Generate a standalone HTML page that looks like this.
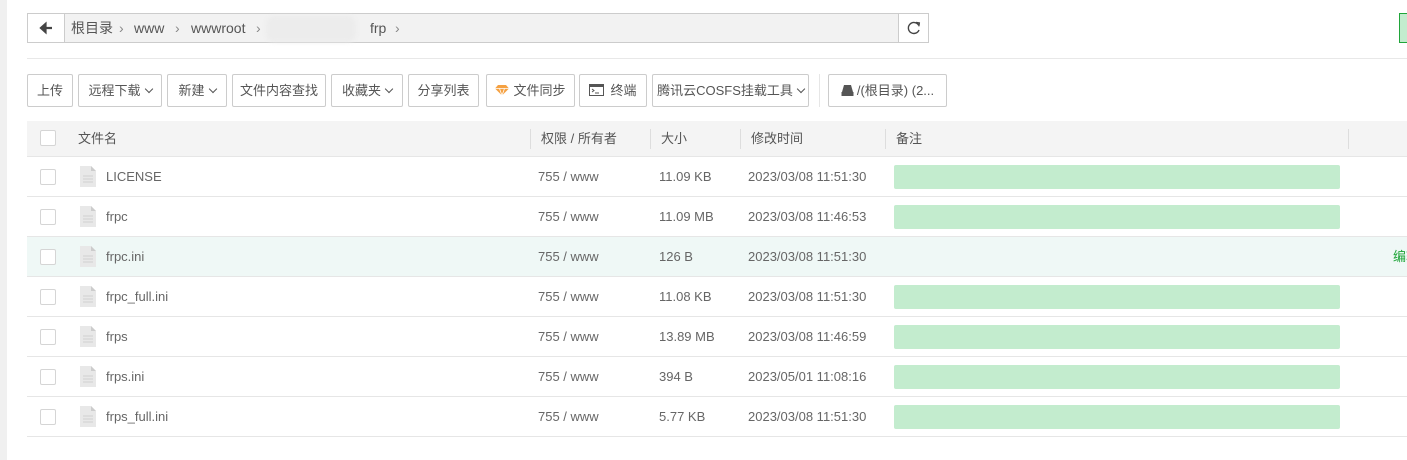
<!DOCTYPE html>
<html><head><meta charset="utf-8"><style>
*{box-sizing:border-box;margin:0;padding:0}
body{width:1407px;height:460px;overflow:hidden;background:#fff;font-family:"Liberation Sans","Noto Sans CJK SC",sans-serif;font-size:13px;color:#555;position:relative}
.abs{position:absolute;white-space:nowrap}
.strip{left:0;top:0;width:7px;height:460px;background:#f0f0f0}
.crumb{left:27px;top:13px;width:902px;height:30px;border:1px solid #ccc;background:#f2f2f2}
.back{left:0;top:0;width:37px;height:28px;background:#fff;border-right:1px solid #ccc}
.ref{right:0;top:0;width:30px;height:28px;background:#fff;border-left:1px solid #ccc}
.ct{top:0;line-height:28px;height:28px;font-size:14px;color:#555}
.btn{top:74px;height:33px;border:1px solid #ccc;border-radius:2px;background:#fff;font-size:13px;color:#555;line-height:31px;text-align:center}
.hdr{left:27px;top:121px;width:1380px;height:36px;background:#f4f4f4;border-bottom:1px solid #e6e6e6}
.row{left:27px;width:1380px;height:40px;border-bottom:1px solid #e6e6e6}
.cb{width:16px;height:16px;border:1px solid #d5d5d5;border-radius:2px;background:#fff}
.t{font-size:13px;color:#666;line-height:20px}
.vd{top:8px;width:1px;height:20px;background:#ddd}
.bar{left:867px;top:8px;width:446px;height:24px;background:#c3ecce;border-radius:2px}
.chev{display:inline-block;width:6px;height:6px;border-right:1.3px solid #555;border-bottom:1.3px solid #555;transform:rotate(45deg);margin-left:5px;position:relative;top:-3px}
</style></head><body>
<div class="abs strip"></div>
<div class="abs crumb">
 <div class="abs back"><svg width="37" height="28"><path d="M13 14h11M13 14l4.5-4v8z" stroke="#444" stroke-width="2.2" fill="#444"/></svg></div>
 <span class="abs ct" style="left:43px">根目录</span><span class="abs ct" style="left:91px;color:#888">›</span>
 <span class="abs ct" style="left:106px">www</span><span class="abs ct" style="left:147px;color:#888">›</span>
 <span class="abs ct" style="left:163px">wwwroot</span><span class="abs ct" style="left:228px;color:#888">›</span>
 <div class="abs" style="left:238px;top:2px;width:90px;height:26px;background:#ececec;border-radius:8px;filter:blur(2px)"></div>
 <span class="abs ct" style="left:342px">frp</span><span class="abs ct" style="left:367px;color:#888">›</span>
 <div class="abs ref"><svg width="30" height="28"><path d="M19.5 11A5.5 5.5 0 1 0 20 16" stroke="#444" stroke-width="1.4" fill="none"/><path d="M17 8.5l3.3 0.5-0.5 3.3" stroke="#444" stroke-width="1.4" fill="none"/></svg></div>
</div>
<div class="abs" style="left:1399px;top:13px;width:10px;height:30px;background:#c3ecce;border:1px solid #20a53a"></div>
<div class="abs" style="left:27px;top:58px;width:1380px;height:1px;background:#e8e8e8"></div>

<div class="abs btn" style="left:27px;width:46px">上传</div>
<div class="abs btn" style="left:78px;width:84px">远程下载<i class="chev"></i></div>
<div class="abs btn" style="left:167px;width:60px">新建<i class="chev"></i></div>
<div class="abs btn" style="left:232px;width:94px">文件内容查找</div>
<div class="abs btn" style="left:331px;width:72px">收藏夹<i class="chev"></i></div>
<div class="abs btn" style="left:408px;width:71px">分享列表</div>
<div class="abs btn" style="left:486px;width:89px"><svg width="14" height="12" style="vertical-align:-1px;margin-right:4px"><path d="M3 1h8l3 3.5-7 7-7-7z" fill="#f5a142"/><path d="M0 4.5h14M4.5 4.5L7 11.5 9.5 4.5" stroke="#fff" stroke-width="0.8" fill="none"/></svg>文件同步</div>
<div class="abs btn" style="left:579px;width:68px"><svg width="15" height="12" style="vertical-align:-1px;margin-right:6px"><rect x="0.5" y="0.5" width="14" height="11" fill="none" stroke="#555"/><rect x="0.5" y="0.5" width="14" height="2.5" fill="#555"/><path d="M3 5l2 1.5-2 1.5M6 9h4" stroke="#555" fill="none"/></svg>终端</div>
<div class="abs btn" style="left:652px;width:157px">腾讯云COSFS挂载工具<i class="chev"></i></div>
<div class="abs" style="left:819px;top:74px;width:1px;height:33px;background:#e6e6e6"></div>
<div class="abs btn" style="left:828px;width:119px"><svg width="13" height="12" style="vertical-align:-1px;margin-right:3px"><path d="M3 1h7l2 7H1z" fill="#555"/><rect x="0.5" y="8" width="12" height="4" fill="#555"/></svg>/(根目录) (2...</div>

<div class="abs hdr">
 <div class="abs cb" style="left:13px;top:9px"></div>
 <span class="abs t" style="left:51px;top:8px;color:#555">文件名</span>
 <div class="abs vd" style="left:503px"></div><span class="abs t" style="left:514px;top:8px;color:#555">权限 / 所有者</span>
 <div class="abs vd" style="left:623px"></div><span class="abs t" style="left:634px;top:8px;color:#555">大小</span>
 <div class="abs vd" style="left:713px"></div><span class="abs t" style="left:724px;top:8px;color:#555">修改时间</span>
 <div class="abs vd" style="left:858px"></div><span class="abs t" style="left:869px;top:8px;color:#555">备注</span>
 <div class="abs vd" style="left:1321px"></div>
</div>

<div id="rows"></div>
<script>
var d=[["LICENSE","11.09 KB","2023/03/08 11:51:30"],["frpc","11.09 MB","2023/03/08 11:46:53"],["frpc.ini","126 B","2023/03/08 11:51:30"],["frpc_full.ini","11.08 KB","2023/03/08 11:51:30"],["frps","13.89 MB","2023/03/08 11:46:59"],["frps.ini","394 B","2023/05/01 11:08:16"],["frps_full.ini","5.77 KB","2023/03/08 11:51:30"]];
var h="";
d.forEach(function(r,i){var y=157+i*40,hi=i==2;
h+='<div class="abs row" style="top:'+y+'px;'+(hi?'background:#eff8f6;':'')+'">'+
'<div class="abs cb" style="left:13px;top:12px"></div>'+
'<svg class="abs" style="left:53px;top:9px" width="16" height="21"><path d="M0 0h11l5 5v16H0z" fill="#e8e8e8"/><path d="M11 0v5h5z" fill="#ccc"/><path d="M3 10h10M3 13h10M3 16h10" stroke="#d0d0d0"/></svg>'+
'<span class="abs t" style="left:79px;top:10px">'+r[0]+'</span>'+
'<span class="abs t" style="left:511px;top:10px">755 / www</span>'+
'<span class="abs t" style="left:632px;top:10px">'+r[1]+'</span>'+
'<span class="abs t" style="left:721px;top:10px">'+r[2]+'</span>'+
(hi?'<span class="abs t" style="left:1366px;top:10px;color:#20a53a">编辑</span>':'<div class="abs bar"></div>')+'</div>';});
document.getElementById("rows").innerHTML=h;
</script>
</body></html>
